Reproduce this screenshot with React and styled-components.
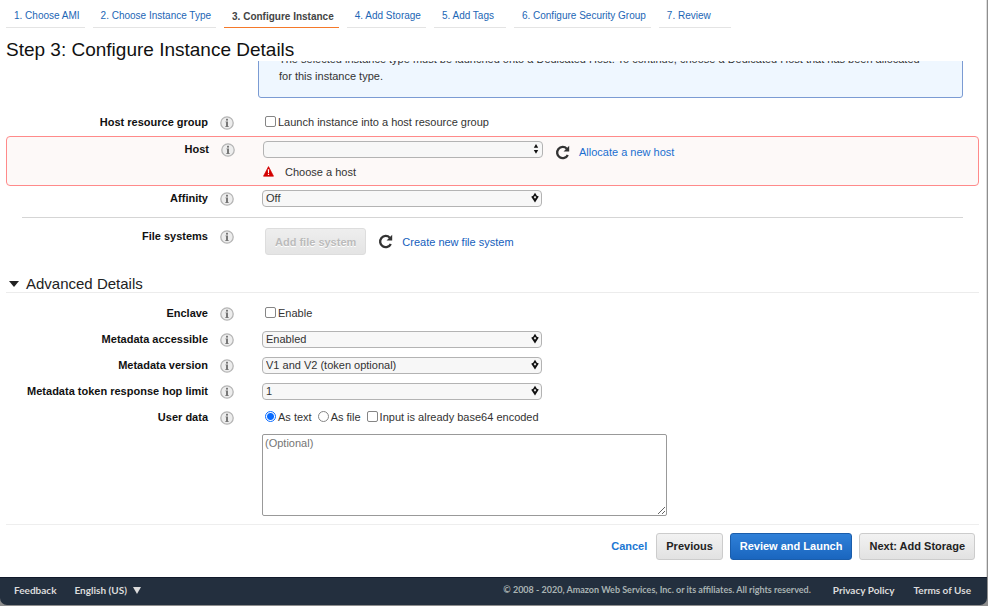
import React, { useState } from "react";
import styled, { createGlobalStyle } from "styled-components";

const GlobalStyle = createGlobalStyle`
  *, *::before, *::after { box-sizing: border-box; }
  body {
    margin: 0;
    background: #8e8e8e;
    color: #333;
    font-family: "Liberation Sans", Arial, Helvetica, sans-serif;
    font-size: 11px;
    line-height: 16px;
  }
  button, select, textarea, input { font: inherit; color: inherit; }
`;

const Page = styled.div`
  display: flex;
  flex-direction: column;
  min-height: 100vh;
  padding: 0 1px 2px 0;
  overflow: hidden;
`;

const Panel = styled.main`
  flex: 1;
  display: flex;
  flex-direction: column;
  min-height: 0;
  background: #fff;
  border-right: 1px solid #ddd;
`;

const Tabs = styled.nav`
  display: flex;
  gap: 8px;
  padding: 0 6px;
`;

const Tab = styled.a`
  min-width: 72px;
  height: 28px;
  padding: ${(p) => (p.$active ? "9px 5px 0 8px" : "8px 5px 0 8px")};
  border-bottom: 1px solid ${(p) => (p.$active ? "#f5792a" : "#e4e4e4")};
  color: ${(p) => (p.$active ? "#444" : "#1c66b5")};
  font-size: 10px;
  font-weight: ${(p) => (p.$active ? "bold" : "normal")};
  text-decoration: none;
  white-space: nowrap;
`;

const Title = styled.h1`
  margin: 0;
  padding: 10px 6px 0;
  height: 33px;
  color: #111;
  font-size: 19px;
  line-height: 24px;
  font-weight: normal;
`;

const Content = styled.div`
  flex: 1;
  padding: 0 7px 8px 6px;
  overflow: hidden;
`;

const Notice = styled.p`
  margin: -24px 16px 0 252px;
  padding: 13px 36px 12px 20px;
  border: 1px solid #7b9bd3;
  border-radius: 3px;
  background: #eff7ff;
  line-height: 17px;
`;

const Group = styled.section`
  padding-top: ${(p) => p.$top}px;
`;

const RowBox = styled.div`
  display: grid;
  grid-template-columns: 202px 14px minmax(0, 1fr);
  align-items: start;
  column-gap: 12px;
  min-height: ${(p) => p.$height || 26}px;
  padding-top: 4px;
`;

const ErrorFrame = styled.div`
  border: 1px solid #ff8a8a;
  border-radius: 4px;
  background: #fdf9f8;
`;

const Caption = styled.span`
  color: #111;
  font-weight: bold;
  text-align: right;
  white-space: nowrap;
`;

const InfoButton = styled.button`
  display: block;
  width: 14px;
  height: 14px;
  margin-top: 2px;
  padding: 0;
  border: 0;
  background: none;
  svg { display: block; }
`;

const Field = styled.div`
  padding-left: 16px;
`;

const Line = styled.div`
  display: flex;
  align-items: ${(p) => p.$align || "center"};
  gap: ${(p) => p.$gap || 0}px;
  height: ${(p) => p.$height || 16}px;
`;

const Choice = styled.label`
  display: flex;
  align-items: center;
  gap: 2px;
  margin-left: 3px;
  white-space: nowrap;
`;

const Tick = styled.input`
  appearance: none;
  width: 11px;
  height: 11px;
  margin: 0 0 2px;
  border: 1px solid #858585;
  border-radius: ${(p) => (p.type === "radio" ? "50%" : "2px")};
  background: #fff;
  &:checked {
    border-color: #0a6cff;
    background: ${(p) =>
      p.type === "radio"
        ? "radial-gradient(circle, #0a6cff 0 3px, #fff 4px)"
        : "#0a6cff"};
  }
`;

const SelectBox = styled.div`
  position: relative;
  align-self: flex-start;
  width: 280px;
  height: 17px;
  svg {
    position: absolute;
    right: 2px;
    top: 2px;
    pointer-events: none;
  }
`;

const Select = styled.select`
  appearance: none;
  display: block;
  width: 100%;
  height: 17px;
  padding: 0 16px 0 3px;
  border: 1px solid #b3b3b3;
  border-radius: 4px;
  background: #f7f7f7;
  line-height: 15px;
`;

const IconButton = styled.button`
  margin-left: 3px;
  padding: 0;
  border: 0;
  background: none;
  svg { display: block; }
`;

const TextLink = styled.a`
  color: ${(p) => p.$color || "#1560bd"};
  text-decoration: none;
`;

const ErrorText = styled.p`
  display: flex;
  align-items: center;
  gap: 11px;
  margin: 4px 0 0;
  svg { margin-bottom: 2px; }
`;

const Button = styled.button`
  height: 27px;
  padding: 0 9px;
  border: 1px solid ${(p) => (p.$primary ? "#1a5dab" : "#ccc")};
  border-radius: 3px;
  background: ${(p) =>
    p.$primary
      ? "linear-gradient(#2f80d8, #1a66bf)"
      : "linear-gradient(#f2f2f2, #e2e2e2)"};
  color: ${(p) => (p.$primary ? "#fff" : "#222")};
  font-weight: bold;
  white-space: nowrap;
  &:disabled {
    border-color: #ddd;
    background: linear-gradient(#eee, #e4e4e4);
    color: #bbb;
    text-shadow: 0 1px 0 #fff;
  }
`;

const Divider = styled.hr`
  margin: 5px 16px 6px;
  border: 0;
  border-top: 1px solid #d5d5d5;
`;

const SectionTitle = styled.h2`
  margin: 0;
  border-bottom: 1px solid #ececec;
  font-size: 15px;
  line-height: 17px;
  font-weight: normal;
`;

const Toggle = styled.button`
  display: flex;
  align-items: center;
  gap: 7px;
  padding: 0 3px;
  border: 0;
  background: none;
  color: #222;
`;

const Notes = styled.textarea`
  display: block;
  width: 405px;
  max-width: 100%;
  height: 82px;
  margin-top: 9px;
  padding: 0 2px;
  border: 1px solid #999;
  border-radius: 2px;
  background: #fff;
  &::placeholder { color: #757575; }
`;

const Actions = styled.div`
  display: flex;
  align-items: center;
  justify-content: flex-end;
  gap: 7px;
  height: 53px;
  margin: 0 7px 0 6px;
  padding: 0 4px 10px 0;
  border-top: 1px solid #eee;
`;

const CancelLink = styled.a`
  margin-right: 2px;
  color: #1b77d3;
  font-weight: bold;
  text-decoration: none;
`;

const Footer = styled.footer`
  display: flex;
  align-items: center;
  height: 28px;
  padding: 0 16px 3px 14px;
  border-top: 1px solid #111a2b;
  border-radius: 0 0 7px 7px;
  background: #232f3e;
  color: #a9b3b3;
  font-family: Lato, "Open Sans", sans-serif;
  font-size: 9px;
  font-weight: bold;
`;

const FooterLink = styled.a`
  margin-left: ${(p) => p.$left || 0}px;
  color: #dcdcdc;
  font-size: 10px;
  text-decoration: none;
`;

const Language = styled.button`
  display: flex;
  align-items: center;
  gap: 6px;
  margin-left: 18px;
  padding: 0;
  border: 0;
  background: none;
  color: #dcdcdc;
  font-size: 10px;
`;

const Copyright = styled.span`
  margin-left: auto;
  white-space: nowrap;
`;

const InfoIcon = () => (
  <svg width="14" height="14" viewBox="0 0 14 14" aria-hidden="true">
    <circle cx="7" cy="7" r="6.2" fill="#ededed" stroke="#b5b5b5" strokeWidth="1.3" />
    <rect x="6" y="2.8" width="2" height="1.8" fill="#777" />
    <path d="M5.5 5.5H8v4.6h.6v.8H5.4v-.8H6V6.3h-.5z" fill="#777" />
  </svg>
);

const RefreshIcon = () => (
  <svg width="15" height="15" viewBox="0 0 15 15" aria-hidden="true">
    <path d="M11.8 3.7A5.6 5.6 0 1 0 12.8 10" fill="none" stroke="#333" strokeWidth="2.3" />
    <path d="M14.2.8V6.6H8.6z" fill="#333" />
  </svg>
);

const WarningIcon = () => (
  <svg width="11" height="11" viewBox="0 0 11 11" aria-hidden="true">
    <path d="M5.5.6 10.5 10.2H.5z" fill="#d40000" stroke="#d40000" strokeWidth=".7" strokeLinejoin="round" />
    <path d="M4.8 3.3h1.4L6 7H5zM4.9 7.8h1.2V9H4.9z" fill="#fff" />
  </svg>
);

const PlainArrows = () => (
  <svg width="10" height="12" viewBox="0 0 10 12" aria-hidden="true">
    <path d="M5 1 7.2 4.7H2.8zM5 10.8 2.8 7.1H7.2z" fill="#111" />
  </svg>
);

const DiamondArrows = () => (
  <svg width="10" height="12" viewBox="0 0 10 12" aria-hidden="true">
    <path d="M5 .8 6.9 3.7 8.8 4.6 5 10.6 1.2 4.8 3.1 3.7z" fill="#111" />
    <path d="M5 4.1 6.3 5 5 6.8 3.7 5z" fill="#f7f7f7" />
  </svg>
);

const CaretDown = ({ color, width, height }) => (
  <svg width={width} height={height} viewBox="0 0 10 6" preserveAspectRatio="none" aria-hidden="true">
    <path d="M0 0h10L5 6z" fill={color} />
  </svg>
);

const steps = [
  "1. Choose AMI",
  "2. Choose Instance Type",
  "3. Configure Instance",
  "4. Add Storage",
  "5. Add Tags",
  "6. Configure Security Group",
  "7. Review",
];

function Row({ label, htmlFor, height, children }) {
  return (
    <RowBox $height={height}>
      <Caption as={htmlFor ? "label" : "span"} htmlFor={htmlFor}>{label}</Caption>
      <InfoButton type="button" aria-label={`About ${label}`}><InfoIcon /></InfoButton>
      <Field>{children}</Field>
    </RowBox>
  );
}

function DropDown({ id, options, plain }) {
  return (
    <SelectBox>
      <Select id={id}>
        {options.map((o) => <option key={o}>{o}</option>)}
      </Select>
      {plain ? <PlainArrows /> : <DiamondArrows />}
    </SelectBox>
  );
}

export default function App() {
  const [mode, setMode] = useState("text");
  const [open, setOpen] = useState(true);
  return (
    <>
      <GlobalStyle />
      <Page>
        <Panel>
          <Tabs aria-label="Wizard steps">
            {steps.map((s, i) => (
              <Tab key={s} href="#" $active={i === 2} aria-current={i === 2 ? "step" : undefined}>{s}</Tab>
            ))}
          </Tabs>
          <Title>Step 3: Configure Instance Details</Title>
          <Content>
            <Notice>
              The selected instance type must be launched onto a Dedicated Host. To continue, choose a Dedicated Host that has been allocated for this instance type.
            </Notice>
            <Group $top={12}>
              <Row label="Host resource group">
                <Line>
                  <Choice><Tick type="checkbox" />Launch instance into a host resource group</Choice>
                </Line>
              </Row>
              <ErrorFrame>
                <Row label="Host" htmlFor="host" height={48}>
                  <Line $gap={9} $height={19} $align="flex-end">
                    <DropDown id="host" options={[""]} plain />
                    <IconButton type="button" aria-label="Refresh hosts"><RefreshIcon /></IconButton>
                    <TextLink href="#" $color="#1b6fd0">Allocate a new host</TextLink>
                  </Line>
                  <ErrorText role="alert"><WarningIcon />Choose a host</ErrorText>
                </Row>
              </ErrorFrame>
              <Row label="Affinity" htmlFor="affinity">
                <DropDown id="affinity" options={["Off", "Host"]} />
              </Row>
              <Divider />
              <Row label="File systems" height={51}>
                <Line $gap={9} $height={27}>
                  <Choice as="span"><Button type="button" disabled>Add file system</Button></Choice>
                  <IconButton type="button" aria-label="Refresh file systems"><RefreshIcon /></IconButton>
                  <TextLink href="#">Create new file system</TextLink>
                </Line>
              </Row>
            </Group>
            <SectionTitle>
              <Toggle type="button" aria-expanded={open} onClick={() => setOpen(!open)}>
                <CaretDown color="#222" width={10} height={6} />
                Advanced Details
              </Toggle>
            </SectionTitle>
            {open && (
              <Group $top={8}>
                <Row label="Enclave">
                  <Line><Choice><Tick type="checkbox" />Enable</Choice></Line>
                </Row>
                <Row label="Metadata accessible" htmlFor="meta">
                  <DropDown id="meta" options={["Enabled", "Disabled"]} />
                </Row>
                <Row label="Metadata version" htmlFor="version">
                  <DropDown id="version" options={["V1 and V2 (token optional)", "V2 (token required)"]} />
                </Row>
                <Row label="Metadata token response hop limit" htmlFor="hops">
                  <DropDown id="hops" options={["1", "2", "3"]} />
                </Row>
                <Row label="User data">
                  <Line $gap={3}>
                    <Choice><Tick type="radio" name="mode" checked={mode === "text"} onChange={() => setMode("text")} />As text</Choice>
                    <Choice><Tick type="radio" name="mode" checked={mode === "file"} onChange={() => setMode("file")} />As file</Choice>
                    <Choice><Tick type="checkbox" />Input is already base64 encoded</Choice>
                  </Line>
                  <Notes placeholder="(Optional)" aria-label="User data" />
                </Row>
              </Group>
            )}
          </Content>
          <Actions>
            <CancelLink href="#">Cancel</CancelLink>
            <Button type="button">Previous</Button>
            <Button type="button" $primary>Review and Launch</Button>
            <Button type="button">Next: Add Storage</Button>
          </Actions>
        </Panel>
        <Footer>
          <FooterLink href="#">Feedback</FooterLink>
          <Language type="button">English (US)<CaretDown color="#dcdcdc" width={8} height={7} /></Language>
          <Copyright>© 2008 - 2020, Amazon Web Services, Inc. or its affiliates. All rights reserved.</Copyright>
          <FooterLink href="#" $left={22}>Privacy Policy</FooterLink>
          <FooterLink href="#" $left={19}>Terms of Use</FooterLink>
        </Footer>
      </Page>
    </>
  );
}
